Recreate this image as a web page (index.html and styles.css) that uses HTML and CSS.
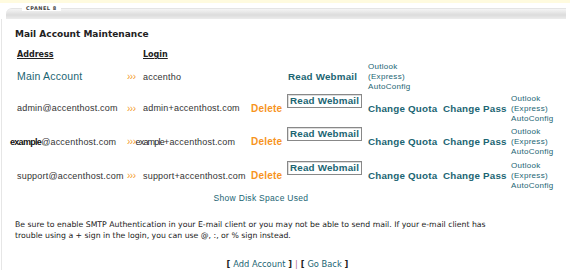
FILE: index.html
```html
<!DOCTYPE html>
<html lang="en">
<head>
  <meta charset="UTF-8">
  <title>Mail Account Maintenance</title>
  <link rel="stylesheet" href="styles.css">
</head>
<body>
  <div class="top-strip"></div>
  <div class="panel-bar">
    <span class="panel-label">CPANEL 8</span>
  </div>
  <div class="page">
    <h2>Mail Account Maintenance</h2>
    <table class="accounts">
      <colgroup>
        <col class="c-addr"><col class="c-arrow"><col class="c-login"><col class="c-del">
        <col class="c-web"><col class="c-quota"><col class="c-pass"><col class="c-cfg">
      </colgroup>
      <tr class="head">
        <th>Address</th><th></th><th>Login</th><th colspan="5"></th>
      </tr>
      <tr class="main">
        <td><a class="main-acct">Main Account</a></td>
        <td><span class="arrow">&rsaquo;&rsaquo;&rsaquo;</span></td>
        <td>accentho</td>
        <td></td>
        <td><a class="big">Read Webmail</a></td>
        <td class="cfg"><a>Outlook<br>(Express)<br>AutoConfig</a></td>
        <td colspan="2"></td>
      </tr>
      <tr class="row-a">
        <td>admin@accenthost.com</td>
        <td><span class="arrow">&rsaquo;&rsaquo;&rsaquo;</span></td>
        <td>admin+accenthost.com</td>
        <td><a class="delete">Delete</a></td>
        <td class="web"><a class="big boxed">Read Webmail</a></td>
        <td><a class="big">Change Quota</a></td>
        <td><a class="big">Change Pass</a></td>
        <td class="cfg"><a>Outlook<br>(Express)<br>AutoConfig</a></td>
      </tr>
      <tr class="row-b">
        <td class="shift"><span class="odd">example</span>@accenthost.com</td>
        <td class="spill"><span class="arrow">&rsaquo;&rsaquo;&rsaquo;</span><span class="odd-login">example</span>+accenthost.com</td>
        <td></td>
        <td><a class="delete">Delete</a></td>
        <td class="web"><a class="big boxed">Read Webmail</a></td>
        <td><a class="big">Change Quota</a></td>
        <td><a class="big">Change Pass</a></td>
        <td class="cfg"><a>Outlook<br>(Express)<br>AutoConfig</a></td>
      </tr>
      <tr class="row-c">
        <td>support@accenthost.com</td>
        <td><span class="arrow">&rsaquo;&rsaquo;&rsaquo;</span></td>
        <td>support+accenthost.com</td>
        <td><a class="delete">Delete</a></td>
        <td class="web"><a class="big boxed">Read Webmail</a></td>
        <td><a class="big">Change Quota</a></td>
        <td><a class="big">Change Pass</a></td>
        <td class="cfg"><a>Outlook<br>(Express)<br>AutoConfig</a></td>
      </tr>
    </table>
    <div class="disk"><a>Show Disk Space Used</a></div>
    <p class="note">Be sure to enable SMTP Authentication in your E-mail client or you may not be able to send mail. If your e-mail client has<br>trouble using a + sign in the login, you can use @, :, or % sign instead.</p>
    <div class="nav">[ <a>Add Account</a> ] <span class="sep">|</span> [ <a>Go Back</a> ]</div>
  </div>
</body>
</html>
```
FILE: styles.css
```css
body {
  margin: 0;
  font-family: "Liberation Sans", Arial, sans-serif;
  color: #333;
  background: #fff;
}

a {
  color: #1b6573;
  text-decoration: none;
}

.top-strip {
  height: 3px;
  background: #fffbdf;
}

.panel-bar {
  height: 10px;
  margin: 5px 4px 0 6px;
  border-top: 1px solid #e4e4e4;
  border-radius: 6px 0 0 0;
  background: linear-gradient(#f5f5f5, #dcdcdc 60%, #ececec);
  position: relative;
}

.panel-label {
  position: absolute;
  left: 16px;
  top: -4px;
  padding: 0 4px;
  background: #fff;
  font-family: "DejaVu Sans", sans-serif;
  font-size: 5px;
  font-weight: bold;
  letter-spacing: 0.5px;
  color: #444;
}

.page {
  border-left: 1px solid #e6e6e6;
  margin-left: 1px;
  padding: 1px 0 0 13px;
  min-height: 250px;
}

h2 {
  margin: 9px 0 10px;
  font-family: "DejaVu Sans", sans-serif;
  font-size: 9px;
  color: #222;
}

.accounts {
  border-collapse: collapse;
  table-layout: fixed;
  width: 556px;
  font-size: 9px;
  line-height: 11px;
  letter-spacing: 0.2px;
}

.c-addr { width: 110px; }
.c-arrow { width: 16px; }
.c-login { width: 108px; }
.c-del { width: 37px; }
.c-web { width: 80px; }
.c-quota { width: 75px; }
.c-pass { width: 68px; }
.c-cfg { width: 62px; }

.accounts th {
  text-align: left;
  font-family: "DejaVu Sans", sans-serif;
  font-size: 8px;
  letter-spacing: 0;
  text-decoration: underline;
  padding: 0 2px 2px;
  color: #222;
}

.accounts td {
  padding: 0 2px;
  white-space: nowrap;
  vertical-align: middle;
}

.accounts tr.main td { height: 30px; }
.accounts tr.row-a td { height: 31px; }
.accounts tr.row-b td { height: 32px; }
.accounts tr.row-c td { height: 32px; }

.main-acct {
  font-size: 10.5px;
}

.arrow {
  color: #f39a2c;
  font-size: 10px;
  letter-spacing: -0.5px;
}

.accounts td.spill {
  overflow: visible;
}

.odd {
  font-weight: bold;
  letter-spacing: -0.7px;
  color: #111;
}

.odd-login {
  letter-spacing: -0.8px;
  color: #222;
}

.accounts td.shift {
  padding-left: 0;
  position: relative;
  left: -5px;
}

.big {
  font-size: 9.8px;
  font-weight: bold;
}

.accounts td.web {
  vertical-align: top;
  padding-top: 2px;
}

.boxed {
  display: inline-block;
  margin-left: -1px;
  padding: 0 2px;
  border: 1px solid #888;
  box-shadow: inset 1px 1px 0 #ddd;
  line-height: 12px;
  vertical-align: top;
}

.delete {
  color: #f7941d;
  font-size: 10px;
  font-weight: bold;
}

.cfg {
  font-size: 8px;
  line-height: 10px;
  letter-spacing: 0.3px;
}

.accounts td.cfg {
  line-height: 10px;
}

.disk {
  text-align: center;
  width: 492px;
  font-size: 8.5px;
  letter-spacing: 0.3px;
  margin-top: 0;
}

.note {
  margin: 16px 0 0;
  font-family: "DejaVu Sans", sans-serif;
  font-size: 7.75px;
  line-height: 11px;
  color: #222;
}

.nav {
  text-align: center;
  width: 545px;
  margin-top: 18px;
  font-family: "DejaVu Sans", sans-serif;
  font-size: 8.3px;
  font-weight: bold;
  color: #222;
}

.nav a {
  font-weight: normal;
}

.sep {
  color: #b06a8c;
  font-weight: normal;
}
```
